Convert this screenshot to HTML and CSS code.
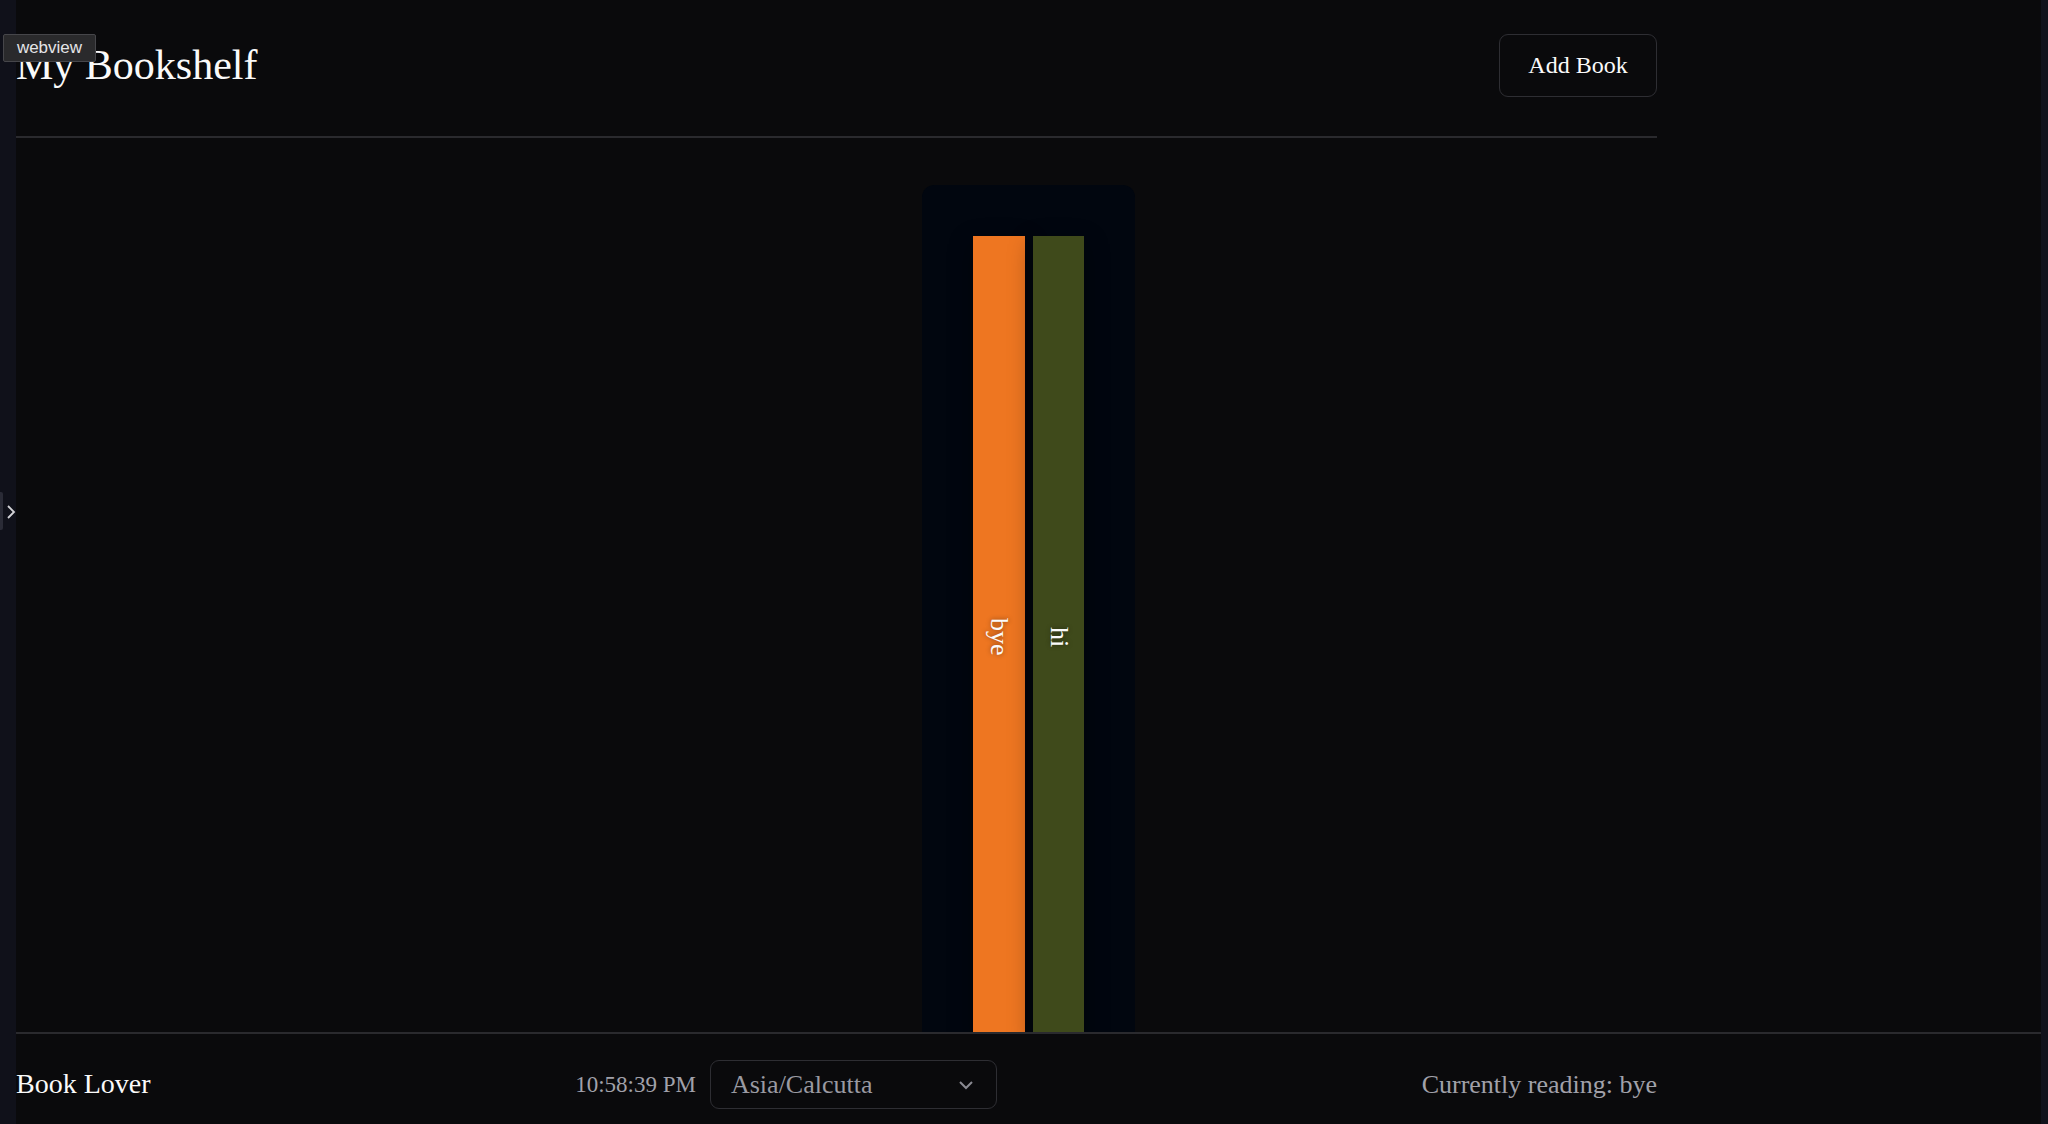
FILE: index.html
```html
<!DOCTYPE html>
<html lang="en">
<head>
<meta charset="utf-8">
<title>My Bookshelf</title>
<link rel="stylesheet" href="styles.css">
</head>
<body>
<div class="webview-tag">webview</div>
<aside class="rail rail-left">
  <span class="rail-handle"></span>
  <svg class="rail-chevron" width="12" height="16" viewBox="0 0 12 16"><path d="M3 2 L9 8 L3 14" fill="none" stroke="#d4d4d8" stroke-width="1.8"/></svg>
</aside>
<div class="main">
  <header class="header">
    <h1 class="title">My Bookshelf</h1>
    <button class="btn">Add Book</button>
  </header>
  <section class="shelf-area">
    <div class="shelf">
      <div class="book book-orange"><span class="book-title">bye</span></div>
      <div class="book book-green"><span class="book-title">hi</span></div>
    </div>
  </section>
  <footer class="footer">
    <div class="footer-inner">
      <div class="brand">Book Lover</div>
      <div class="clock">
        <span class="time">10:58:39 PM</span>
        <div class="select">
          <span>Asia/Calcutta</span>
          <svg width="16" height="10" viewBox="0 0 16 10"><path d="M2 2 L8 8 L14 2" fill="none" stroke="#8a8a92" stroke-width="2"/></svg>
        </div>
      </div>
      <div class="reading">Currently reading: bye</div>
    </div>
  </footer>
</div>
<aside class="rail rail-right"></aside>
</body>
</html>
```
FILE: styles.css
```css
html, body {
  margin: 0;
  padding: 0;
}
body {
  background: #0a0a0c;
  height: 1124px;
  overflow: hidden;
  display: flex;
  font-family: "Liberation Serif", "Times New Roman", serif;
  color: #f4f4f5;
}
.rail {
  flex: none;
  background: #10111a;
}
.rail-left {
  width: 16px;
  position: relative;
}
.rail-right {
  width: 7px;
  background: #11121b;
}
.rail-handle {
  position: absolute;
  left: 0;
  top: 492px;
  width: 3px;
  height: 38px;
  background: #2a2b36;
  border-radius: 0 2px 2px 0;
}
.rail-chevron {
  position: absolute;
  left: 5px;
  top: 504px;
}
.webview-tag {
  position: absolute;
  left: 3px;
  top: 34px;
  width: 91px;
  height: 26px;
  background: #2a2a2c;
  border: 1px solid #46464a;
  border-radius: 2px;
  font-family: "Liberation Sans", Arial, sans-serif;
  font-size: 17px;
  line-height: 26px;
  color: #e4e4e7;
  text-align: center;
  z-index: 5;
}
.main {
  flex: 1;
  display: flex;
  flex-direction: column;
  min-width: 0;
}
.header {
  width: 1641px;
  display: flex;
  justify-content: space-between;
  align-items: center;
  padding: 34px 0 39px;
  border-bottom: 2px solid #2a2a2e;
}
.title {
  margin: 0;
  font-size: 42px;
  font-weight: 400;
  line-height: 1.15;
  color: #fafafa;
}
.btn {
  font-family: inherit;
  font-size: 24px;
  line-height: 37px;
  color: #fafafa;
  background: transparent;
  border: 1px solid #2e2e33;
  border-radius: 9px;
  padding: 12px 28px;
  width: 158px;
  cursor: pointer;
}
.shelf-area {
  flex: 1;
  min-height: 0;
  overflow: hidden;
  display: flex;
  justify-content: center;
  align-items: flex-start;
  padding-top: 47px;
}
.shelf {
  flex: none;
  width: 213px;
  box-sizing: border-box;
  padding: 51px;
  background: #01060f;
  border-radius: 12px;
  display: flex;
  gap: 8px;
}
.book {
  width: 52px;
  height: 802px;
  display: flex;
  align-items: center;
  justify-content: center;
  box-shadow: 0 8px 24px rgba(0, 0, 0, 0.4);
}
.book-orange {
  background: #ee7621;
}
.book-green {
  background: #3f4a1b;
  width: 51px;
}
.book-title {
  writing-mode: vertical-rl;
  font-size: 26px;
  color: #fafafa;
  text-shadow: 0 0 5px rgba(0, 0, 0, 0.45);
}
.footer {
  border-top: 2px solid #2a2a2e;
  padding: 26px 0 15px;
  background: #0a0a0c;
}
.footer-inner {
  width: 1641px;
  height: 49px;
  display: flex;
  justify-content: space-between;
  align-items: center;
}
.brand {
  font-size: 28px;
  line-height: 1.15;
  color: #fafafa;
}
.clock {
  display: flex;
  align-items: center;
  gap: 14px;
}
.time {
  font-size: 23px;
  color: #a1a1aa;
}
.select {
  width: 287px;
  height: 49px;
  box-sizing: border-box;
  border: 1px solid #2e2e33;
  border-radius: 9px;
  padding: 0 22px 0 20px;
  display: flex;
  align-items: center;
  justify-content: space-between;
  font-size: 26px;
  color: #9a9aa2;
}
.reading {
  font-size: 26px;
  color: #a1a1aa;
}
```
